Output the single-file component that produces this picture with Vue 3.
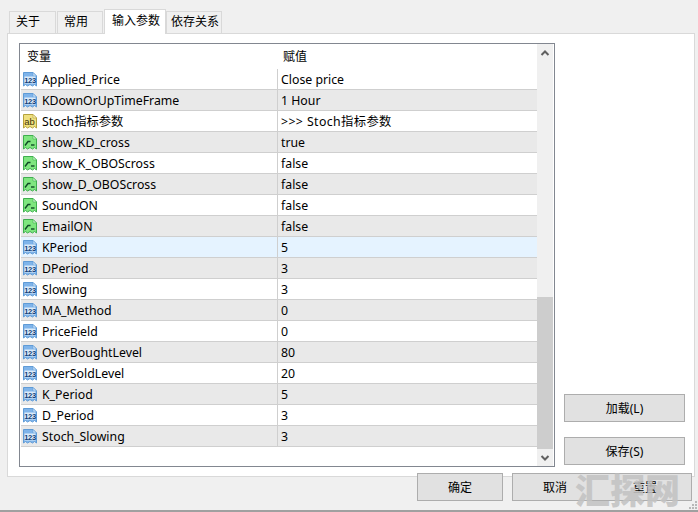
<script setup>
const tabs = [
  { label: '关于', w: 47, pad: 6 },
  { label: '常用', w: 46, pad: 6 },
  { label: '输入参数', w: 62, pad: 7, active: true },
  { label: '依存关系', w: 56, pad: 4 }
]
const rows = [
  ['n', 'Applied_Price', 'Close price'],
  ['n', 'KDownOrUpTimeFrame', '1 Hour'],
  ['s', 'Stoch指标参数', '>>> Stoch指标参数'],
  ['b', 'show_KD_cross', 'true'],
  ['b', 'show_K_OBOScross', 'false'],
  ['b', 'show_D_OBOScross', 'false'],
  ['b', 'SoundON', 'false'],
  ['b', 'EmailON', 'false'],
  ['n', 'KPeriod', '5', true],
  ['n', 'DPeriod', '3'],
  ['n', 'Slowing', '3'],
  ['n', 'MA_Method', '0'],
  ['n', 'PriceField', '0'],
  ['n', 'OverBoughtLevel', '80'],
  ['n', 'OverSoldLevel', '20'],
  ['n', 'K_Period', '5'],
  ['n', 'D_Period', '3'],
  ['n', 'Stoch_Slowing', '3']
]
const palette = {
  n: { fill: '#7fb4ea', stroke: '#5f9bd6', fold: '#cfe4f8' },
  s: { fill: '#efe07f', stroke: '#b5a23c', fold: '#fbf4c4' },
  b: { fill: '#7fe67f', stroke: '#3fae4f', fold: '#cdf7cd' }
}
const docPath = 'M1.5 1.5H11L14.5 5V15L12.5 13.5L10.5 15L8 13.5L5.5 15L3.5 13.5L1.5 15Z'
</script>

<template>
  <div class="window">
    <div class="tabs">
      <div
        v-for="t in tabs"
        :key="t.label"
        class="tab"
        :class="{ active: t.active }"
        :style="{ width: t.w + 'px', paddingLeft: t.pad + 'px' }"
      >{{ t.label }}</div>
    </div>
    <div class="panel">
      <div class="list">
        <div class="table">
          <div class="head">
            <span class="c1 hc">变量</span>
            <span class="c2 hc">赋值</span>
          </div>
          <div
            v-for="(r, i) in rows"
            :key="r[1]"
            class="row"
            :class="{ even: i % 2 === 1, hover: r[3] }"
          >
            <div class="c1 name">
              <svg class="ico" width="16" height="16" viewBox="0 0 16 16">
                <path :d="docPath" :fill="palette[r[0]].fill" :stroke="palette[r[0]].stroke" stroke-width="1" />
                <path d="M11 1.5V5H14.5Z" :fill="palette[r[0]].fold" :stroke="palette[r[0]].stroke" stroke-width="0.6" />
                <template v-if="r[0] === 'n'">
                  <rect x="2.5" y="5.5" width="11" height="7" fill="#dcebfa" />
                  <text x="8" y="11.6" class="ico-t n">123</text>
                </template>
                <template v-else-if="r[0] === 's'">
                  <text x="7.5" y="11.6" class="ico-t s">ab</text>
                </template>
                <template v-else>
                  <path d="M3 11.5L6 7.5H8.5" fill="none" stroke="#0f4a26" stroke-width="1.4" />
                  <path d="M9 11H12.5" fill="none" stroke="#0f4a26" stroke-width="1.4" />
                </template>
              </svg>
              <span>{{ r[1] }}</span>
            </div>
            <div class="c2 val" :class="{ wide: r[0] === 's' }">{{ r[2] }}</div>
          </div>
        </div>
        <div class="scroll">
          <div class="arrow">
            <svg width="10" height="8" viewBox="0 0 10 8"><path d="M1.5 6L5 2.5L8.5 6" fill="none" stroke="#606060" stroke-width="2" /></svg>
          </div>
          <div class="track"><div class="thumb"></div></div>
          <div class="arrow">
            <svg width="10" height="8" viewBox="0 0 10 8"><path d="M1.5 2L5 5.5L8.5 2" fill="none" stroke="#606060" stroke-width="2" /></svg>
          </div>
        </div>
      </div>
      <div class="side">
        <button class="btn side-btn">加载(L)</button>
        <button class="btn side-btn">保存(S)</button>
      </div>
    </div>
    <div class="footer">
      <button class="btn ok">确定</button>
      <button class="btn cancel"><span>取消</span><span class="reset">重置</span></button>
    </div>
    <div class="mark">汇探网</div>
    <svg class="grip" width="10" height="10" viewBox="0 0 10 10">
      <g fill="#b8b8b8">
        <rect x="7" y="1" width="2" height="2" />
        <rect x="4" y="4" width="2" height="2" />
        <rect x="7" y="4" width="2" height="2" />
        <rect x="1" y="7" width="2" height="2" />
        <rect x="4" y="7" width="2" height="2" />
        <rect x="7" y="7" width="2" height="2" />
      </g>
    </svg>
  </div>
</template>

<style scoped>
.window {
  position: relative;
  width: 698px;
  height: 512px;
  box-sizing: border-box;
  overflow: hidden;
  display: flex;
  flex-direction: column;
  background: #f0f0f0;
  border-bottom: 2px solid #a0a0a0;
  font-family: "Noto Sans", "Noto Sans CJK SC", sans-serif;
  font-size: 12px;
  color: #000;
}
.tabs {
  display: flex;
  align-items: flex-end;
  height: 33px;
  padding-left: 9px;
  box-sizing: border-box;
}
.tab {
  height: 22px;
  box-sizing: border-box;
  border: 1px solid #d9d9d9;
  border-bottom: none;
  background: #f0f0f0;
  line-height: 20px;
  margin-right: 1px;
}
.tab.active {
  height: 25px;
  background: #fff;
  line-height: 21px;
  margin-right: 0;
  position: relative;
  z-index: 1;
  margin-bottom: -1px;
}
.panel {
  width: 688px;
  height: 444px;
  margin-left: 7px;
  box-sizing: border-box;
  background: #fff;
  border: 1px solid #d9d9d9;
  padding: 9px 0 0 11px;
  display: flex;
}
.list {
  width: 536px;
  height: 424px;
  box-sizing: border-box;
  border: 1px solid #828790;
  display: flex;
  background: #fff;
}
.table {
  width: 517px;
  padding-left: 1px;
}
.head {
  display: flex;
  height: 25px;
  align-items: center;
  padding-bottom: 2px;
  box-sizing: border-box;
}
.row {
  display: flex;
  height: 21px;
  box-sizing: border-box;
  border-bottom: 1px solid #cfcfcf;
  align-items: center;
  background: #fff;
  font-size: 12.3px;
}
.row.even { background: #e9e9e9; }
.row.hover { background: #e5f3ff; }
.c1 {
  width: 257px;
  box-sizing: border-box;
  flex: none;
  height: 100%;
}
.c2 {
  flex: 1;
  box-sizing: border-box;
  padding-left: 3px;
}
.wide { letter-spacing: 0.4px; }
.head .c1 { padding-left: 6px; height: auto; }
.head .c2 { padding-left: 5px; }
.name {
  display: flex;
  align-items: center;
  padding-left: 1px;
  gap: 4px;
  border-right: 1px solid #cfcfcf;
}
.ico { flex: none; }
.ico-t {
  font-family: "Liberation Sans", sans-serif;
  font-weight: 700;
  text-anchor: middle;
}
.ico-t.n { font-size: 7.5px; fill: #123f78; letter-spacing: -0.3px; }
.ico-t.s { font-size: 9.5px; fill: #3f3608; font-weight: 400; }
.scroll {
  width: 17px;
  background: #f0f0f0;
  display: flex;
  flex-direction: column;
  border-right: 1px solid #fff;
  box-sizing: border-box;
}
.arrow {
  height: 17px;
  flex: none;
  display: flex;
  align-items: center;
  justify-content: center;
}
.track {
  flex: 1;
  display: flex;
  flex-direction: column;
  justify-content: flex-end;
}
.thumb {
  height: 152px;
  background: #cdcdcd;
}
.side {
  width: 121px;
  margin-left: 9px;
  height: 424px;
  display: flex;
  flex-direction: column;
  justify-content: flex-end;
  gap: 15px;
  padding-bottom: 2px;
  box-sizing: border-box;
}
.btn {
  box-sizing: border-box;
  background: #e1e1e1;
  border: 1px solid #adadad;
  font: inherit;
  color: #000;
  padding: 0;
  height: 28px;
}
.side-btn { width: 121px; }
.footer {
  display: flex;
  gap: 9px;
  margin-top: -4px;
  padding-left: 417px;
  position: relative;
}
.ok { width: 86px; }
.cancel {
  width: 180px;
  display: flex;
  align-items: center;
  padding-left: 30px;
}
.reset { margin-left: 66px; }
.mark {
  position: absolute;
  right: 18px;
  bottom: 0;
  font-family: "Noto Sans CJK SC", sans-serif;
  font-size: 35px;
  line-height: 42px;
  font-weight: 900;
  color: rgba(195, 195, 195, 0.9);
}
.grip {
  position: absolute;
  right: 0;
  bottom: 0;
}
</style>
